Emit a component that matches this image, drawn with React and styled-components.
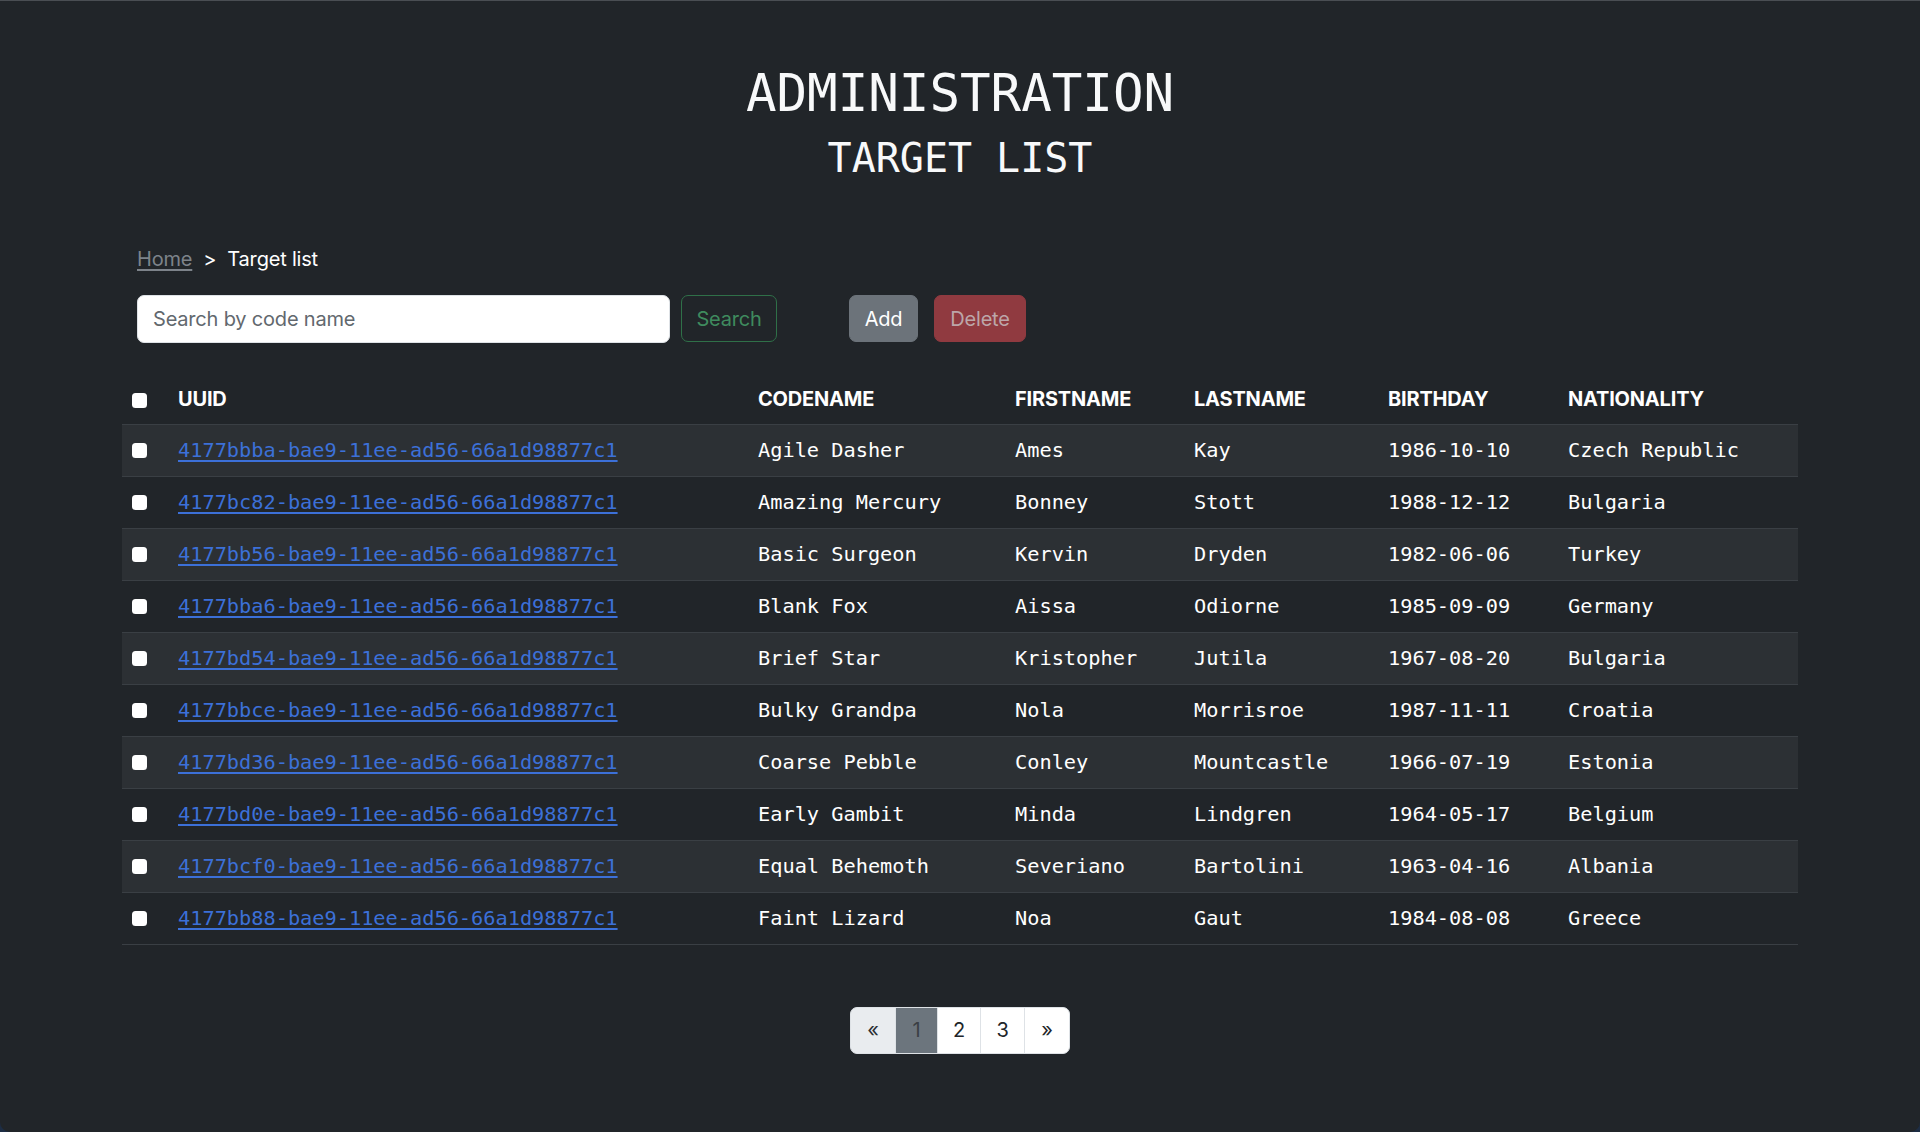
import React from "react";
import styled, { createGlobalStyle } from "styled-components";

const Global = createGlobalStyle`
  html, body { margin: 0; padding: 0; background: #1d2d44; }
  body { font-family: Inter, "Liberation Sans", sans-serif; letter-spacing: -0.012em; }
  * { box-sizing: border-box; }
`;

const Window = styled.div`
  min-height: 1132px;
  background: #212529;
  border-top: 1px solid #4a4e53;
  border-radius: 0 0 10px 10px;
  color: #fff;
  overflow: hidden;
`;

const Container = styled.div`
  width: 1676px;
  margin: 0 auto;
`;

const Header = styled.header`
  padding-top: 63px;
  text-align: center;
  font-family: "DejaVu Sans Mono", "Liberation Mono", monospace;
  letter-spacing: 0;
  color: #f8f9fa;
`;

const Title = styled.h1`
  margin: 0 0 9px;
  font-size: 50.8px;
  font-weight: 400;
  line-height: 1.2;
`;

const Subtitle = styled.h2`
  margin: 0;
  font-size: 40px;
  font-weight: 400;
  line-height: 1.2;
`;

const Breadcrumb = styled.nav`
  margin-top: 62px;
  padding-left: 15px;
  display: flex;
  align-items: center;
  gap: 11px;
  font-size: 20px;
  line-height: 30px;
`;

const Crumb = styled.a`
  color: #7d838a;
  text-decoration: underline;
  text-underline-offset: 3px;
`;

const Sep = styled.span`
  color: #fff;
`;

const Current = styled.span`
  color: #fff;
`;

const Toolbar = styled.div`
  margin-top: 21px;
  padding-left: 15px;
  display: flex;
  align-items: center;
`;

const SearchInput = styled.input`
  width: 533px;
  height: 48px;
  padding: 0 15px;
  border: 1px solid #dee2e6;
  border-radius: 7px;
  font-family: inherit;
  letter-spacing: inherit;
  font-size: 20px;
  color: #212529;
  background: #fff;
  outline: none;
  &::placeholder { color: #62686e; }
`;

const Button = styled.button`
  height: 47px;
  padding: 0 ${(p) => p.$px}px;
  border-radius: 7px;
  font-family: inherit;
  letter-spacing: inherit;
  font-size: 20px;
  line-height: 30px;
  cursor: pointer;
  border: 1px solid ${(p) => p.$border};
  background: ${(p) => p.$bg};
  color: ${(p) => p.$color};
  margin-left: ${(p) => p.$ml}px;
  width: ${(p) => p.$w}px;
`;

const Table = styled.table`
  margin-top: 31px;
  width: 1676px;
  table-layout: fixed;
  border-collapse: collapse;
  color: #fff;
`;

const HeadCell = styled.th`
  text-align: left;
  padding: 10px;
  font-size: 20px;
  line-height: 30px;
  font-weight: 700;
  border-bottom: 1px solid #3a3f44;
  vertical-align: middle;
`;

const Row = styled.tr`
  background: ${(p) => (p.$striped ? "#2c3034" : "transparent")};
  border-bottom: 1px solid #3a3f44;
`;

const Cell = styled.td`
  padding: 10px;
  font-family: "DejaVu Sans Mono", "Liberation Mono", monospace;
  letter-spacing: 0;
  font-size: 20.3px;
  line-height: 31px;
  white-space: nowrap;
  vertical-align: middle;
`;

const Check = styled.input.attrs({ type: "checkbox" })`
  appearance: none;
  -webkit-appearance: none;
  display: block;
  margin: ${(p) => (p.$head ? "4px 0 0" : "1px 0 0")};
  width: 15px;
  height: 15px;
  background: #fff;
  border-radius: 3.5px;
  border: none;
`;

const UuidLink = styled.a`
  color: #3c70d8;
  text-decoration: underline;
  text-underline-offset: 3px;
`;

const Pager = styled.nav`
  margin-top: 62px;
  display: flex;
  justify-content: center;
`;

const PageList = styled.ul`
  display: flex;
  list-style: none;
  margin: 0;
  padding: 0;
`;

const PageItem = styled.li`
  width: ${(p) => p.$w}px;
  height: 47px;
  display: flex;
  align-items: center;
  justify-content: center;
  font-size: 20px;
  background: ${(p) => p.$bg};
  color: ${(p) => p.$color};
  border: 1px solid #dee2e6;
  margin-left: -1px;
  &:first-child { margin-left: 0; border-radius: 7px 0 0 7px; }
  &:last-child { border-radius: 0 7px 7px 0; }
`;

const rows = [
  ["4177bbba-bae9-11ee-ad56-66a1d98877c1", "Agile Dasher", "Ames", "Kay", "1986-10-10", "Czech Republic"],
  ["4177bc82-bae9-11ee-ad56-66a1d98877c1", "Amazing Mercury", "Bonney", "Stott", "1988-12-12", "Bulgaria"],
  ["4177bb56-bae9-11ee-ad56-66a1d98877c1", "Basic Surgeon", "Kervin", "Dryden", "1982-06-06", "Turkey"],
  ["4177bba6-bae9-11ee-ad56-66a1d98877c1", "Blank Fox", "Aissa", "Odiorne", "1985-09-09", "Germany"],
  ["4177bd54-bae9-11ee-ad56-66a1d98877c1", "Brief Star", "Kristopher", "Jutila", "1967-08-20", "Bulgaria"],
  ["4177bbce-bae9-11ee-ad56-66a1d98877c1", "Bulky Grandpa", "Nola", "Morrisroe", "1987-11-11", "Croatia"],
  ["4177bd36-bae9-11ee-ad56-66a1d98877c1", "Coarse Pebble", "Conley", "Mountcastle", "1966-07-19", "Estonia"],
  ["4177bd0e-bae9-11ee-ad56-66a1d98877c1", "Early Gambit", "Minda", "Lindgren", "1964-05-17", "Belgium"],
  ["4177bcf0-bae9-11ee-ad56-66a1d98877c1", "Equal Behemoth", "Severiano", "Bartolini", "1963-04-16", "Albania"],
  ["4177bb88-bae9-11ee-ad56-66a1d98877c1", "Faint Lizard", "Noa", "Gaut", "1984-08-08", "Greece"],
];

const cols = [
  { label: "", w: 46 },
  { label: "UUID", w: 580 },
  { label: "CODENAME", w: 257 },
  { label: "FIRSTNAME", w: 179 },
  { label: "LASTNAME", w: 194 },
  { label: "BIRTHDAY", w: 180 },
  { label: "NATIONALITY", w: 240 },
];

export default function App() {
  return (
    <>
      <Global />
      <Window>
        <Container>
          <Header>
            <Title>ADMINISTRATION</Title>
            <Subtitle>TARGET LIST</Subtitle>
          </Header>

          <Breadcrumb>
            <Crumb href="#">Home</Crumb>
            <Sep>&gt;</Sep>
            <Current>Target list</Current>
          </Breadcrumb>

          <Toolbar>
            <SearchInput placeholder="Search by code name" />
            <Button $ml={11} $w={96} $px={12} $border="#2f7048" $bg="transparent" $color="#3f8b5e">Search</Button>
            <Button $ml={72} $w={69} $px={10} $border="#6c737a" $bg="#6c737a" $color="#fff">Add</Button>
            <Button $ml={16} $w={92} $px={10} $border="#903a40" $bg="#903a40" $color="#bca6a9">Delete</Button>
          </Toolbar>

          <Table>
            <colgroup>
              {cols.map((c, i) => (
                <col key={i} style={{ width: c.w }} />
              ))}
            </colgroup>
            <thead>
              <tr>
                {cols.map((c, i) => (
                  <HeadCell key={i}>{i === 0 ? <Check $head /> : c.label}</HeadCell>
                ))}
              </tr>
            </thead>
            <tbody>
              {rows.map((r, i) => (
                <Row key={r[0]} $striped={i % 2 === 0}>
                  <Cell><Check /></Cell>
                  <Cell><UuidLink href="#">{r[0]}</UuidLink></Cell>
                  <Cell>{r[1]}</Cell>
                  <Cell>{r[2]}</Cell>
                  <Cell>{r[3]}</Cell>
                  <Cell>{r[4]}</Cell>
                  <Cell>{r[5]}</Cell>
                </Row>
              ))}
            </tbody>
          </Table>

          <Pager>
            <PageList>
              <PageItem $w={46} $bg="#e9ecef" $color="#2b2f33">«</PageItem>
              <PageItem $w={43} $bg="#6c757d" $color="#3a3f44">1</PageItem>
              <PageItem $w={44} $bg="#fff" $color="#212529">2</PageItem>
              <PageItem $w={45} $bg="#fff" $color="#212529">3</PageItem>
              <PageItem $w={46} $bg="#fff" $color="#212529">»</PageItem>
            </PageList>
          </Pager>
        </Container>
      </Window>
    </>
  );
}
